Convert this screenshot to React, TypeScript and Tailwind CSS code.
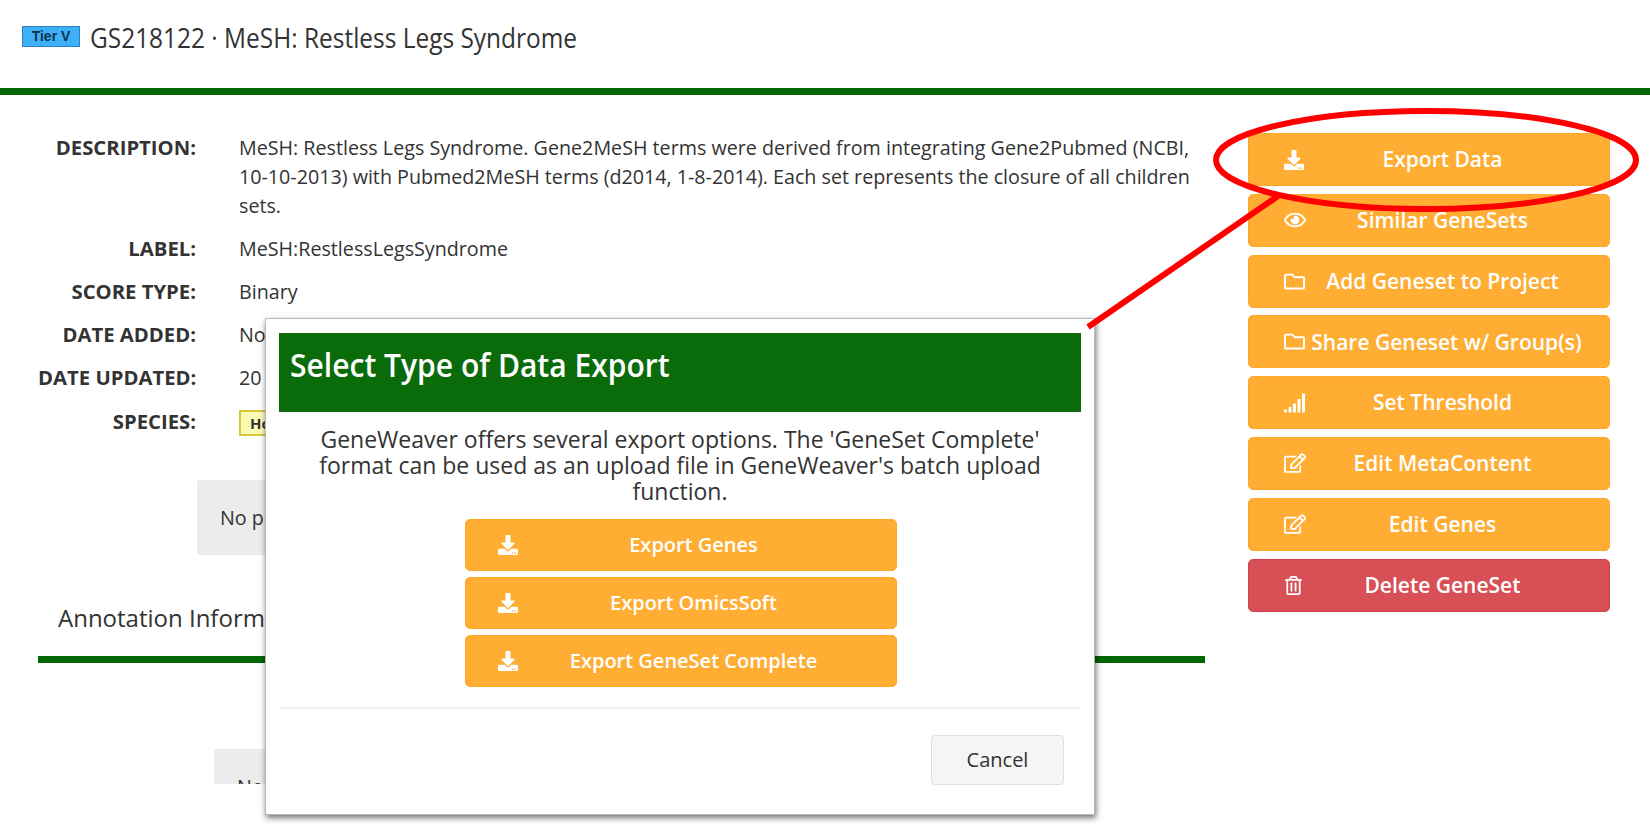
import type { ReactNode } from 'react';
import {
  FaDownload, FaRegEdit, FaRegEye, FaRegFolder, FaRegTrashAlt,
} from 'react-icons/fa';

const SignalIcon = () => (
  <svg width="22" height="20" viewBox="0 0 22 20" fill="currentColor">
    <rect x="0" y="16.5" width="3" height="3" />
    <rect x="4.5" y="14" width="3" height="5.5" />
    <rect x="9" y="10.5" width="3" height="9" />
    <rect x="13.5" y="6" width="3" height="13.5" />
    <rect x="18" y="0.5" width="3" height="19" />
  </svg>
);

// text under the dialog is cut off in the picture, only the visible part is kept
const rows: { label: string; value: ReactNode }[] = [
  { label: 'LABEL:', value: 'MeSH:RestlessLegsSyndrome' },
  { label: 'SCORE TYPE:', value: 'Binary' },
  { label: 'DATE ADDED:', value: 'No' },
  { label: 'DATE UPDATED:', value: '20' },
];

const sideButtons: { label: string; icon: ReactNode; danger?: boolean; wide?: boolean }[] = [
  { label: 'Export Data', icon: <FaDownload size={20} /> },
  { label: 'Similar GeneSets', icon: <FaRegEye size={22} /> },
  { label: 'Add Geneset to Project', icon: <FaRegFolder size={21} /> },
  { label: 'Share Geneset w/ Group(s)', icon: <FaRegFolder size={21} />, wide: true },
  { label: 'Set Threshold', icon: <SignalIcon /> },
  { label: 'Edit MetaContent', icon: <FaRegEdit size={22} /> },
  { label: 'Edit Genes', icon: <FaRegEdit size={22} /> },
  { label: 'Delete GeneSet', icon: <FaRegTrashAlt size={19} />, danger: true },
];

const SideButton = ({
  label, icon, danger, wide,
}: { label: string; icon: ReactNode; danger?: boolean; wide?: boolean }) => (
  <button
    type="button"
    className={`flex h-[53px] w-full items-center rounded-[5px] border pl-[35px] text-[21px] font-semibold text-white ${wide ? 'pr-[22px]' : 'pr-[30px]'} ${danger ? 'border-[#d43f4a] bg-[#d84f56]' : 'border-[#ffa726] bg-[#ffad33]'}`}
  >
    <span className="flex w-[22px] shrink-0 justify-start">{icon}</span>
    <span className="flex-1 whitespace-nowrap pt-[1px] text-center">{label}</span>
  </button>
);

const ExportButton = ({ label }: { label: string }) => (
  <button
    type="button"
    className="flex h-[52px] w-full items-center rounded-[5px] border border-[#ffa726] bg-[#ffad33] pl-[32px] pr-[27px] text-white"
  >
    <FaDownload size={20} className="shrink-0" />
    <span className="flex-1 whitespace-nowrap text-center text-[20px] font-semibold">{label}</span>
  </button>
);

const App = () => (
  <div className="relative h-[830px] w-[1650px] overflow-hidden bg-white font-['Open_Sans',sans-serif] text-[#333]">
    <header className="flex h-[95px] items-start gap-[10px] border-b-[7px] border-[#006600] pl-[22px] pt-[26px]">
      <span className="flex h-[21px] w-[58px] items-center justify-center border border-[#2f7fc0] bg-[#3db0f7] font-['Liberation_Sans',sans-serif] text-[14px] font-bold text-[#10324f]">
        Tier V
      </span>
      <h1 className="mt-[-8px] origin-left scale-x-[0.905] whitespace-nowrap text-[27px] font-medium leading-[40px]">
        GS218122 · MeSH: Restless Legs Syndrome
      </h1>
    </header>

    <div className="flex h-[689px] overflow-hidden pl-[38px] pr-[40px]">
      <main className="w-[1167px] shrink-0 pt-[38px]">
        <dl className="flex flex-col gap-[14px] text-[19.7px] leading-[29px]">
          <div className="flex gap-[43px]">
            <dt className="w-[158px] shrink-0 text-right text-[20.3px] font-bold">DESCRIPTION:</dt>
            <dd className="w-[960px]">
              MeSH: Restless Legs Syndrome. Gene2MeSH terms were derived from integrating Gene2Pubmed (NCBI,
              <br />
              10-10-2013) with Pubmed2MeSH terms (d2014, 1-8-2014). Each set represents the closure of all children
              <br />
              sets.
            </dd>
          </div>
          {rows.map((row) => (
            <div key={row.label} className="flex gap-[43px]">
              <dt className="w-[158px] shrink-0 whitespace-nowrap text-right text-[20.3px] font-bold">{row.label}</dt>
              <dd>{row.value}</dd>
            </div>
          ))}
          <div className="flex gap-[43px]">
            <dt className="w-[158px] shrink-0 pt-[1px] text-right text-[20.3px] font-bold">SPECIES:</dt>
            <dd className="mt-[4px] flex h-[26px] w-[80px] items-center border-2 border-[#d9c93a] bg-[#fbfbb8] pl-[9px] text-[15px] font-bold">
              Ho
            </dd>
          </div>
        </dl>
        <div className="ml-[159px] mt-[44px] flex h-[75px] w-[840px] items-center rounded-[3px] bg-[#ececec] pl-[23px] text-[19.7px]">
          No p
        </div>
        <h2 className="mt-[45px] pl-[20px] text-[24px] font-normal leading-[36px]">Annotation Inform</h2>
        <div className="mt-[20px] h-[7px] bg-[#006600]" />
        <div className="ml-[176px] mt-[86px] flex h-[75px] w-[800px] items-center rounded-[3px] bg-[#ececec] pl-[23px] text-[19.7px]">
          No
        </div>
      </main>

      <aside className="ml-[43px] flex w-[362px] shrink-0 flex-col gap-[7.8px] pt-[38px]">
        {sideButtons.map((button) => (
          <SideButton key={button.label} label={button.label} icon={button.icon} danger={button.danger} wide={button.wide} />
        ))}
      </aside>
    </div>

    <section className="absolute left-[265px] top-[318px] flex h-[497px] w-[830px] flex-col border border-[#b8b8b8] bg-white px-[13px] pt-[14px] shadow-[1px_3px_6px_rgba(0,0,0,0.55)]">
      <div className="flex h-[79px] shrink-0 items-start bg-[#0a6b0a] pl-[11px] pt-[10px] text-white">
        <h3 className="origin-left scale-x-[0.91] whitespace-nowrap text-[33px] font-semibold leading-[44px]">Select Type of Data Export</h3>
      </div>
      <p className="mt-[14px] whitespace-nowrap text-center text-[23px] leading-[26px]">
        GeneWeaver offers several export options. The &apos;GeneSet Complete&apos;
        <br />
        format can be used as an upload file in GeneWeaver&apos;s batch upload
        <br />
        function.
      </p>
      <div className="ml-[186px] mt-[15px] flex w-[432px] flex-col gap-[6px]">
        <ExportButton label="Export Genes" />
        <ExportButton label="Export OmicsSoft" />
        <ExportButton label="Export GeneSet Complete" />
      </div>
      <div className="mt-[20px] h-[2px] bg-[#eeeeee]" />
      <div className="mt-[26px] flex justify-end pr-[17px]">
        <button
          type="button"
          className="h-[50px] w-[133px] rounded-[4px] border border-[#dddddd] bg-[#f5f5f5] text-[20px]"
        >
          Cancel
        </button>
      </div>
    </section>

    <svg className="pointer-events-none absolute inset-0" width="1650" height="830" fill="none" stroke="#ff0000" strokeWidth="6">
      <ellipse cx="1426" cy="160" rx="210" ry="49" />
      <line x1="1278" y1="196" x2="1088" y2="327" />
    </svg>
  </div>
);

export default App;
